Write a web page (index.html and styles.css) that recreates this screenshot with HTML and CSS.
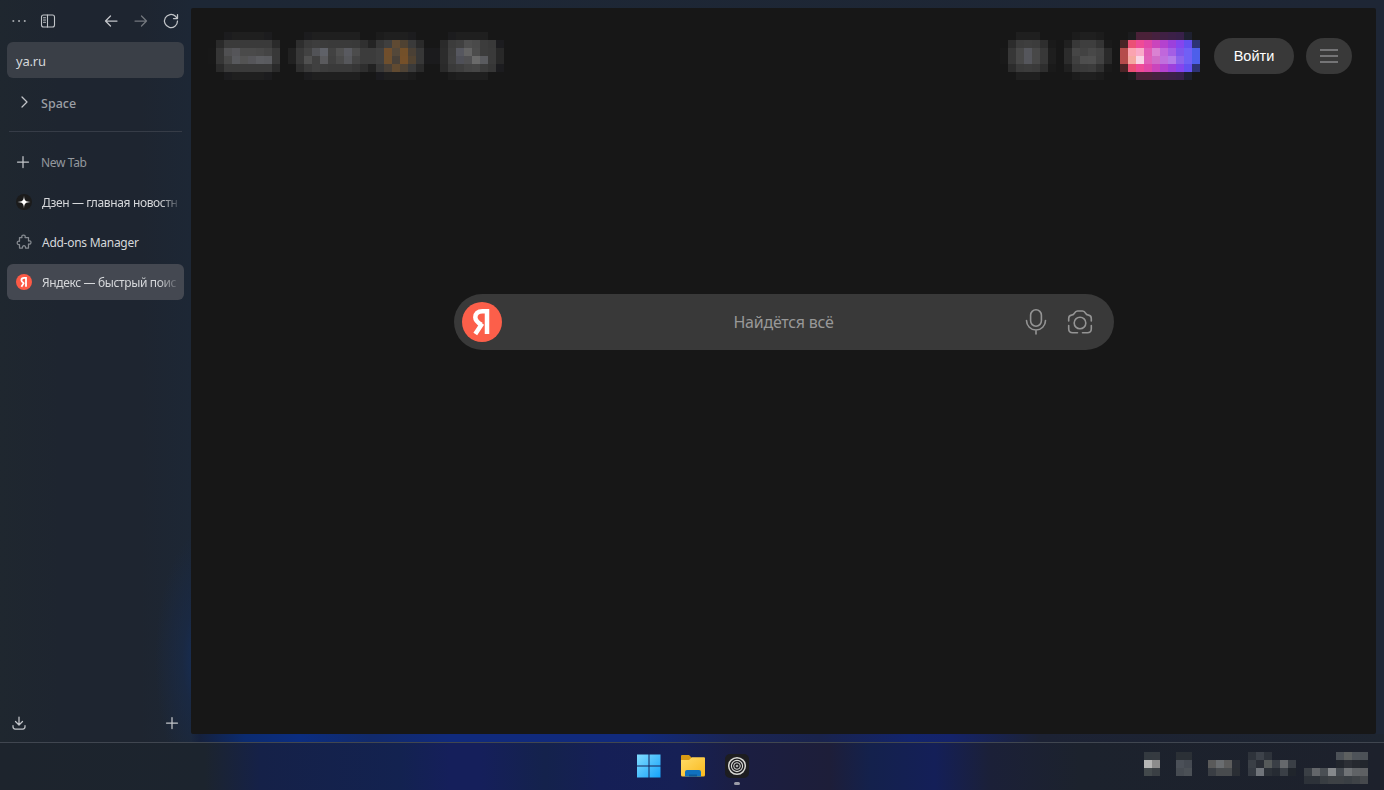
FILE: index.html
```
<!DOCTYPE html>
<html lang="ru">
<head>
  <meta charset="UTF-8">
  <meta name="viewport" content="width=device-width, initial-scale=1.0">
  <title>Яндекс — быстрый поиск</title>
  <link rel="stylesheet" href="styles.css">
</head>
<body>
  <!-- Browser window -->
  <div class="window">
    <aside class="sidebar">
      <div class="toolbar">
        <svg class="icon" width="16" height="16" viewBox="0 0 16 16"><path d="M1.500 8h1.700M7.200 8h1.700M12.900 8h1.700" stroke-width="1.700" stroke-linecap="butt"/></svg>
        <svg class="icon panel-icon" width="16" height="16" viewBox="0 0 16 16"><rect x="1.5" y="2" width="13" height="12" rx="2"/><path d="M7.500 2v12M3.500 4.700h2M3.500 7h2M3.500 9.200h2"/></svg>
        <svg class="icon back-icon" width="16" height="16" viewBox="0 0 16 16"><path d="M14 8H2.500M7.500 3L2.500 8l5 5"/></svg>
        <svg class="icon dim" width="16" height="16" viewBox="0 0 16 16"><path d="M2 8h11.500M8.500 3l5 5-5 5"/></svg>
        <svg class="icon" width="16" height="16" viewBox="0 0 16 16"><path d="M14.500 8a6.500 6.500 0 1 1-2-4.700L14 5M14.500 1.500V5.500H10.500"/></svg>
      </div>

      <div class="url">ya.ru</div>

      <div class="space">
        <svg class="icon" width="16" height="16" viewBox="0 0 16 16"><path d="M6 3l5 5-5 5"/></svg>
        <span>Space</span>
      </div>

      <div class="tab new-tab">
        <svg class="icon" width="16" height="16" viewBox="0 0 16 16"><path d="M7 2.500v11M1.500 8h11"/></svg>
        <span class="title">New Tab</span>
      </div>
      <div class="tab">
        <svg width="16" height="16" viewBox="0 0 16 16"><circle cx="8" cy="8" r="8" fill="#1b1b1b"/><path d="M8 1.500c.2 5 1.500 6.300 6.500 6.500-5 .2-6.300 1.500-6.500 6.500-.2-5-1.500-6.300-6.500-6.500 5-.2 6.300-1.500 6.500-6.500z" fill="#fff"/></svg>
        <span class="title fade">Дзен — главная новостн</span>
      </div>
      <div class="tab">
        <svg class="icon puzzle" width="16" height="16" viewBox="0 0 16 16"><path d="M3.500 3.500H6C5.300 2 6.300 1 7.500 1S9.700 2 9 3.500h3.500V7C14 6.400 15 7.300 15 8.500s-1 2-2.500 1.500v4H9.500c.3-1.400-.5-2.300-1.500-2.300S6.200 12.600 6.500 14h-3v-3.500C2 11 1.200 10 1.200 8.900S2 6.800 3.500 7.300z"/></svg>
        <span class="title">Add-ons Manager</span>
      </div>
      <div class="tab active">
        <svg width="16" height="16" viewBox="0 0 40 40"><circle cx="20" cy="20" r="20" fill="#fc5a46"/><path class="ya" d="M25 32V9.500H20.500C16 9.500 13.500 12 13.500 15.500S16 21 20 23M20 21.500L13.500 32"/></svg>
        <span class="title fade">Яндекс — быстрый поис</span>
      </div>

      <div class="sidebar-bottom">
        <svg class="icon" width="16" height="16" viewBox="0 0 16 16"><path d="M8 2v7.500M4.500 6.500L8 10l3.500-3.500M2 10.500v1.300Q2 14 4.200 14h7.600Q14 14 14 11.800v-1.300"/></svg>
        <svg class="icon" width="16" height="16" viewBox="0 0 16 16"><path d="M8 2.500v11M2.500 8h11"/></svg>
      </div>
    </aside>

    <main class="page">
      <header class="header">
        <div class="mosaic m-links" data-mosaic="links"></div>
        <div class="mosaic m-tools" data-mosaic="tools"></div>
        <button class="login">Войти</button>
        <button class="menu">
          <svg width="18" height="14" viewBox="0 0 18 14"><path d="M0 1h18M0 7h18M0 13h18" stroke="#88888b" stroke-width="1.300"/></svg>
        </button>
      </header>

      <div class="search">
        <svg class="logo" width="40" height="40" viewBox="0 0 40 40"><circle cx="20" cy="20" r="20" fill="#fc5f4a"/><path class="ya" d="M25 32V9.200H20.500C15.600 9.200 13.300 11.800 13.300 15.300C13.300 18.500 15 20.300 19.500 22.800M20.200 21.500L13.300 32"/></svg>
        <span class="placeholder">Найдётся всё</span>
        <svg class="search-icon" width="24" height="28" viewBox="0 0 24 28"><rect x="6.600" y="1.800" width="10.800" height="16.400" rx="5.400"/><path d="M2.500 12.500a9.500 9.500 0 0 0 19 0M12 22v4"/></svg>
        <svg class="search-icon" width="28" height="28" viewBox="0 0 28 28"><circle cx="14" cy="15" r="5.800"/><path d="M2.700 13v-2.500Q2.700 7.400 5.500 7.100Q7.700 6.900 8.500 5.200Q9.500 3 11.500 3h5Q18.500 3 19.500 5.200Q20.300 6.900 22.500 7.100Q25.300 7.400 25.300 10.500V13M2.700 17.500v3.300Q2.700 24.800 6.700 24.800H11.500M25.300 17.500v3.300Q25.300 24.800 21.300 24.800H16.500"/></svg>
      </div>
    </main>
  </div>

  <!-- Taskbar -->
  <footer class="taskbar">
    <div class="apps">
      <svg width="24" height="24" viewBox="0 0 24 24">
        <defs>
          <linearGradient id="win" gradientUnits="userSpaceOnUse" x1="0" y1="0" x2="24" y2="24"><stop offset="0" stop-color="#82dcff"/><stop offset="1" stop-color="#12a2fb"/></linearGradient>
        </defs>
        <path fill="url(#win)" d="M0 .5h11.500v11H0zM12.500.5H23.500v11h-11zM0 12.500h11.500v11H0zM12.500 12.500h11v11h-11z"/>
      </svg>
      <svg width="24" height="24" viewBox="0 0 24 24">
        <defs>
          <linearGradient id="folder" x1="0" y1="0" x2="1" y2="1"><stop offset="0" stop-color="#ffdb68"/><stop offset="1" stop-color="#fab91d"/></linearGradient>
        </defs>
        <path fill="#d89a14" d="M0 2Q0 1 1 1h7l2.500 2.500V9H0z"/>
        <path fill="url(#folder)" d="M0 6h8l3-2.700h12q1 0 1 1V21q0 1.500-1.500 1.500h-21Q0 22.500 0 21z"/>
        <path fill="#1071bf" d="M4 22.500V18q0-2 2-2h12q2 0 2 2v4.500z"/>
        <path fill="#0c5a9b" d="M8 20.500h8v2H8z"/>
      </svg>
      <div class="app-running">
        <svg width="24" height="24" viewBox="0 0 24 24"><rect width="24" height="24" rx="5" fill="#1d1d20"/><g fill="none" stroke="#d8d8d4"><circle cx="12" cy="12" r="8.300" stroke-width="1.500"/><circle cx="12" cy="12" r="5.600" stroke-width="1.100"/><circle cx="12" cy="12" r="3.300" stroke-width="1"/></g><circle cx="12" cy="12" r="1.300" fill="#aaa"/></svg>
        <span class="running-mark"></span>
      </div>
    </div>
    <div class="mosaic tray" data-mosaic="tray"></div>
  </footer>

  <script src="script.js"></script>
</body>
</html>
```
FILE: styles.css
```
* {
  box-sizing: border-box;
}

body {
  margin: 0;
  width: 1384px;
  height: 790px;
  overflow: hidden;
  display: flex;
  flex-direction: column;
  background-color: #1e2530;
  font-family: "Noto Sans", "Open Sans", sans-serif;
  color: #d5d7da;
}

/* Browser window */
.window {
  height: 742px;
  display: flex;
  padding: 8px 8px 8px 0;
  background:
    linear-gradient(90deg, transparent 191px, #15213d 200px, #0b2b70 245px, #0b2d80 300px, #112a6b 370px, #102a7c 450px, #112a7c 640px, #1a2555 730px, #19234c 820px, #12246c 910px, #14236a 950px, #1c2234 1040px, #1e2530 1384px) 0 734px / 1384px 8px no-repeat,
    radial-gradient(ellipse 50px 130px at 205px 660px, #15305f 0%, rgba(24, 42, 75, 0.6) 45%, transparent 100%),
    linear-gradient(90deg, #1f272f 0, #1e2530 60px, #1e2530 140px, #1d2735 190px, #1e2635 1384px);
}

/* Sidebar */
.sidebar {
  width: 191px;
  padding: 5px 7px 3px;
  display: flex;
  flex-direction: column;
}

.icon {
  fill: none;
  stroke: #c2c5c9;
  stroke-width: 1.25;
  stroke-linecap: round;
  stroke-linejoin: round;
}

.toolbar {
  display: flex;
  height: 16px;
  padding-left: 4px;
  gap: 14px;
}

.toolbar .panel-icon {
  stroke-width: 1.1;
  margin-left: -1px;
}

.toolbar .back-icon {
  margin-left: 33px;
}

.toolbar .dim {
  stroke: #73777e;
}

.url {
  height: 36px;
  margin-top: 13px;
  padding-left: 9px;
  border-radius: 6px;
  background-color: #3a3f47;
  font-size: 13px;
  letter-spacing: -0.2px;
  line-height: 38px;
}

.space {
  display: flex;
  align-items: center;
  height: 54px;
  margin: 0 2px;
  padding: 0 7px 5px;
  gap: 9px;
  border-bottom: 1px solid #363c47;
  font-size: 12.5px;
  font-weight: 500;
  color: #9b9fa5;
}

.space span {
  padding-top: 2px;
}

.tab {
  display: flex;
  align-items: center;
  height: 36px;
  width: 177px;
  margin-bottom: 4px;
  padding: 0 6px 0 9px;
  gap: 10px;
  border-radius: 6px;
  font-size: 12px;
  letter-spacing: -0.27px;
}

.tab svg {
  flex-shrink: 0;
}

.new-tab {
  margin-top: 12px;
  color: #94989e;
}

.new-tab .title {
  margin-left: -1px;
  letter-spacing: -0.35px;
}

.title {
  white-space: nowrap;
  padding-top: 1px;
}

.fade {
  letter-spacing: -0.36px;
  mask-image: linear-gradient(90deg, #000 87%, rgba(0, 0, 0, 0.2));
}

.tab .puzzle {
  stroke: #858a90;
}

.active {
  background-color: #444851;
}

.ya {
  fill: none;
  stroke: #fff;
  stroke-width: 4.5;
}

.sidebar-bottom {
  margin-top: auto;
  padding-left: 4px;
  padding-right: 4px;
  display: flex;
  justify-content: space-between;
}

/* Page */
.page {
  flex: 1;
  background-color: #171717;
  border-radius: 2px;
}

.header {
  display: flex;
  align-items: center;
  padding: 24px 24px 0 17px;
}

.mosaic {
  display: grid;
  grid-auto-rows: 8px;
}

.m-tools {
  margin-left: auto;
  margin-right: 14px;
}

.login,
.menu {
  height: 36px;
  border: none;
  padding: 0;
  border-radius: 18px;
  background-color: #393939;
}

.login {
  width: 80px;
  margin-right: 12px;
  font-family: "Liberation Sans", sans-serif;
  font-size: 14.5px;
  color: #fff;
}

.menu {
  width: 46px;
  display: flex;
  align-items: center;
  justify-content: center;
}

.search {
  display: flex;
  align-items: center;
  width: 660px;
  height: 56px;
  margin: 214px auto 0;
  padding: 0 20px 0 8px;
  border-radius: 28px;
  background-color: #393939;
}

.placeholder {
  width: 564px;
  padding-bottom: 1px;
  text-align: center;
  font-size: 16px;
  letter-spacing: -0.25px;
  color: #989898;
}

.search-icon {
  flex-shrink: 0;
  fill: none;
  stroke: #949494;
  stroke-width: 1.6;
  stroke-linecap: round;
}

.search-icon + .search-icon {
  margin-left: 18px;
}

.logo + .placeholder {
  margin-right: -42px;
}

/* Taskbar */
.taskbar {
  height: 48px;
  display: flex;
  border-top: 1px solid #404650;
  padding: 9px 16px 0 637px;
  background: linear-gradient(90deg, #1d242d 0, #1c242e 205px, #152148 260px, #132250 400px, #151f5b 450px, #151f5b 480px, #14224c 545px, #151f56 600px, #162055 680px, #1b1e42 740px, #1d1e39 830px, #14214c 870px, #141f58 935px, #1b2038 990px, #1c222d 1080px, #1d212c 1384px);
}

.apps {
  display: flex;
  gap: 20px;
  padding-top: 2px;
}

.app-running {
  width: 24px;
  display: flex;
  flex-direction: column;
  align-items: center;
}

.running-mark {
  width: 6px;
  height: 3px;
  margin-top: 4px;
  border-radius: 2px;
  background-color: #9b9ca8;
}

.tray {
  margin-left: auto;
}
```
FILE: script.js
```
// one colour per 8px cell, "-" leaves it empty; two digits mean a plain grey
const parseRow = (str) => str.split(' ').map(c => c === '-' ? null : '#' + (c.length === 2 ? c + c + c : c));

const mosaics = {
  links: {
    cols: 37,
    rows: [
      '- - 1c1c1e 1f 1f 1f 1f 1c1c1e - - - - 1c1c1e 1f 1f 1f 1f 1f 1f - - 1c 1f 1f 1f 1c1c1e - - - - 1c1c1e 1f 1f 1f 1f - -',
      '- 2a 3a 3a 3a 3a 3a 3a 2a - - 2e 3a 3d 3b 3a 3a 3a 39 30 24 37 3f 5f4a33 4f4232 3a 2a - - 2a 3c 40 4e 4a 3c 39 1c1c1f',
      '18 36 505052 555559 4a 4a 48 44 38 - 21 38 42 525357 5f6168 42 50 595a60 4c 3c 3c 40 704e2c 54483a 735029 4a4035 37 1b1b1d 1b1b1d 2c 3f 56575f 63 4c 3c 3a 28',
      '18 36 48 58595d 53 56565a 5c5d61 5a5b5f 38 - 21 38 50 40 5a5a5d 40 4a 56575b 44 3c 3c 40 6e4f2d 484038 755029 524331 37 1b1b1d 1b1b1d 2c 40 4f5058 505052 6a 5a5b5f 3a 28',
      '- 2a 3a 3a 3a 3a 3a 3a 2a - - 2e 3a 40 3c 3a 3a 3a 36 2e 22 38 484038 614a30 4f4335 3a 2a - - 2a 3a 3e 44 46 3c 36 1c1c1f',
      '- - 1c1c1e 1f 1f 1f 1f 1c1c1e - - - - 1c1c1e 1f 1f 1f 1f 1f 1f - - 1b1b1f 1f 1f 1f 1c - - - - 1c 1f 1f 1f 1f - -'
    ]
  },
  tools: {
    cols: 25,
    rows: [
      '- - 1f 1f 1f - - - - 1c 1f 1f 1c - - - 1c1c1e 4a2138 4a2138 46213f 402044 3c2048 38204a 1e2030 -',
      '- 2c 3c 3e 3c 2e 1a - 20 38 3e 3e 34 1a - 4a2426 eb5075 ef4b97 e147a8 ca45bc b442cf 9c40dc 8545ee 6450f0 2d3374',
      '19 37 48 55565c 48 38 1e - 2c 46 42 48 43 2a - b54b4b fba3b0 f9aac8 e05cb5 da82d2 c067dc a45ee5 7f55ec 7060f5 4d5fea',
      '19 37 48 55565c 48 38 1e - 2c 40 4e 4f 42 2a - b54b4b f5a8a0 f9d3e4 e05fb8 d06cc8 c070de b57ce9 8c62ec 7060f5 4d5fea',
      '- 2c 3a 3c 3a 2e 1a - 20 38 3a 3c 30 1a - 4a2426 eb5075 ef4b97 e147a8 ca45bc b442cf 9c40dc 8545ee 6450f0 2d3374',
      '- - 1f 1f 1f - - - - 1c 1f 1f 1c - - - 1c1c1e 4a2138 4a2138 46213f 402044 3c2048 38204a 1e2030 -'
    ]
  },
  tray: {
    cols: 28,
    rows: [
      '343a40 353a40 - - 2b3036 2b3036 - - - - - - - 2e333b 3d424a 2e333b - - - - - - - - 4c5157 5d6060 4e5359 4c5157',
      'b5b5b5 8c8c8c - - 4b5058 454a52 - - 5a5a5a 6a6d70 5c5c5c 2a2e36 - 3a3f46 2a2e36 565a5a 3a3f46 65686c 3a3f46 - - - - - 22262d 2c2f35 26292f 22262d',
      '43494c 3a3f44 - - 464b52 4b5056 - - 3a3e44 484b4e 484b4e 2a2e34 - 363b43 70747a 2c3138 262b33 3a3f46 20252c - 3a3f45 63666a 4a4f54 85888b 454a50 707376 606366 5e6063',
      '- - - - - - - - - - - - - - - - - - - - 2d3239 2d3239 383d42 3d4145 3d4145 3a3f44 3f4347 46494d'
    ]
  }
};

document.querySelectorAll('.mosaic').forEach(el => {
  const mosaic = mosaics[el.dataset.mosaic];
  el.style.gridTemplateColumns = `repeat(${mosaic.cols}, 8px)`;
  mosaic.rows.forEach(row => {
    parseRow(row).forEach(color => {
      const cell = document.createElement('i');
      if (color) cell.style.backgroundColor = color;
      el.appendChild(cell);
    });
  });
});
```
